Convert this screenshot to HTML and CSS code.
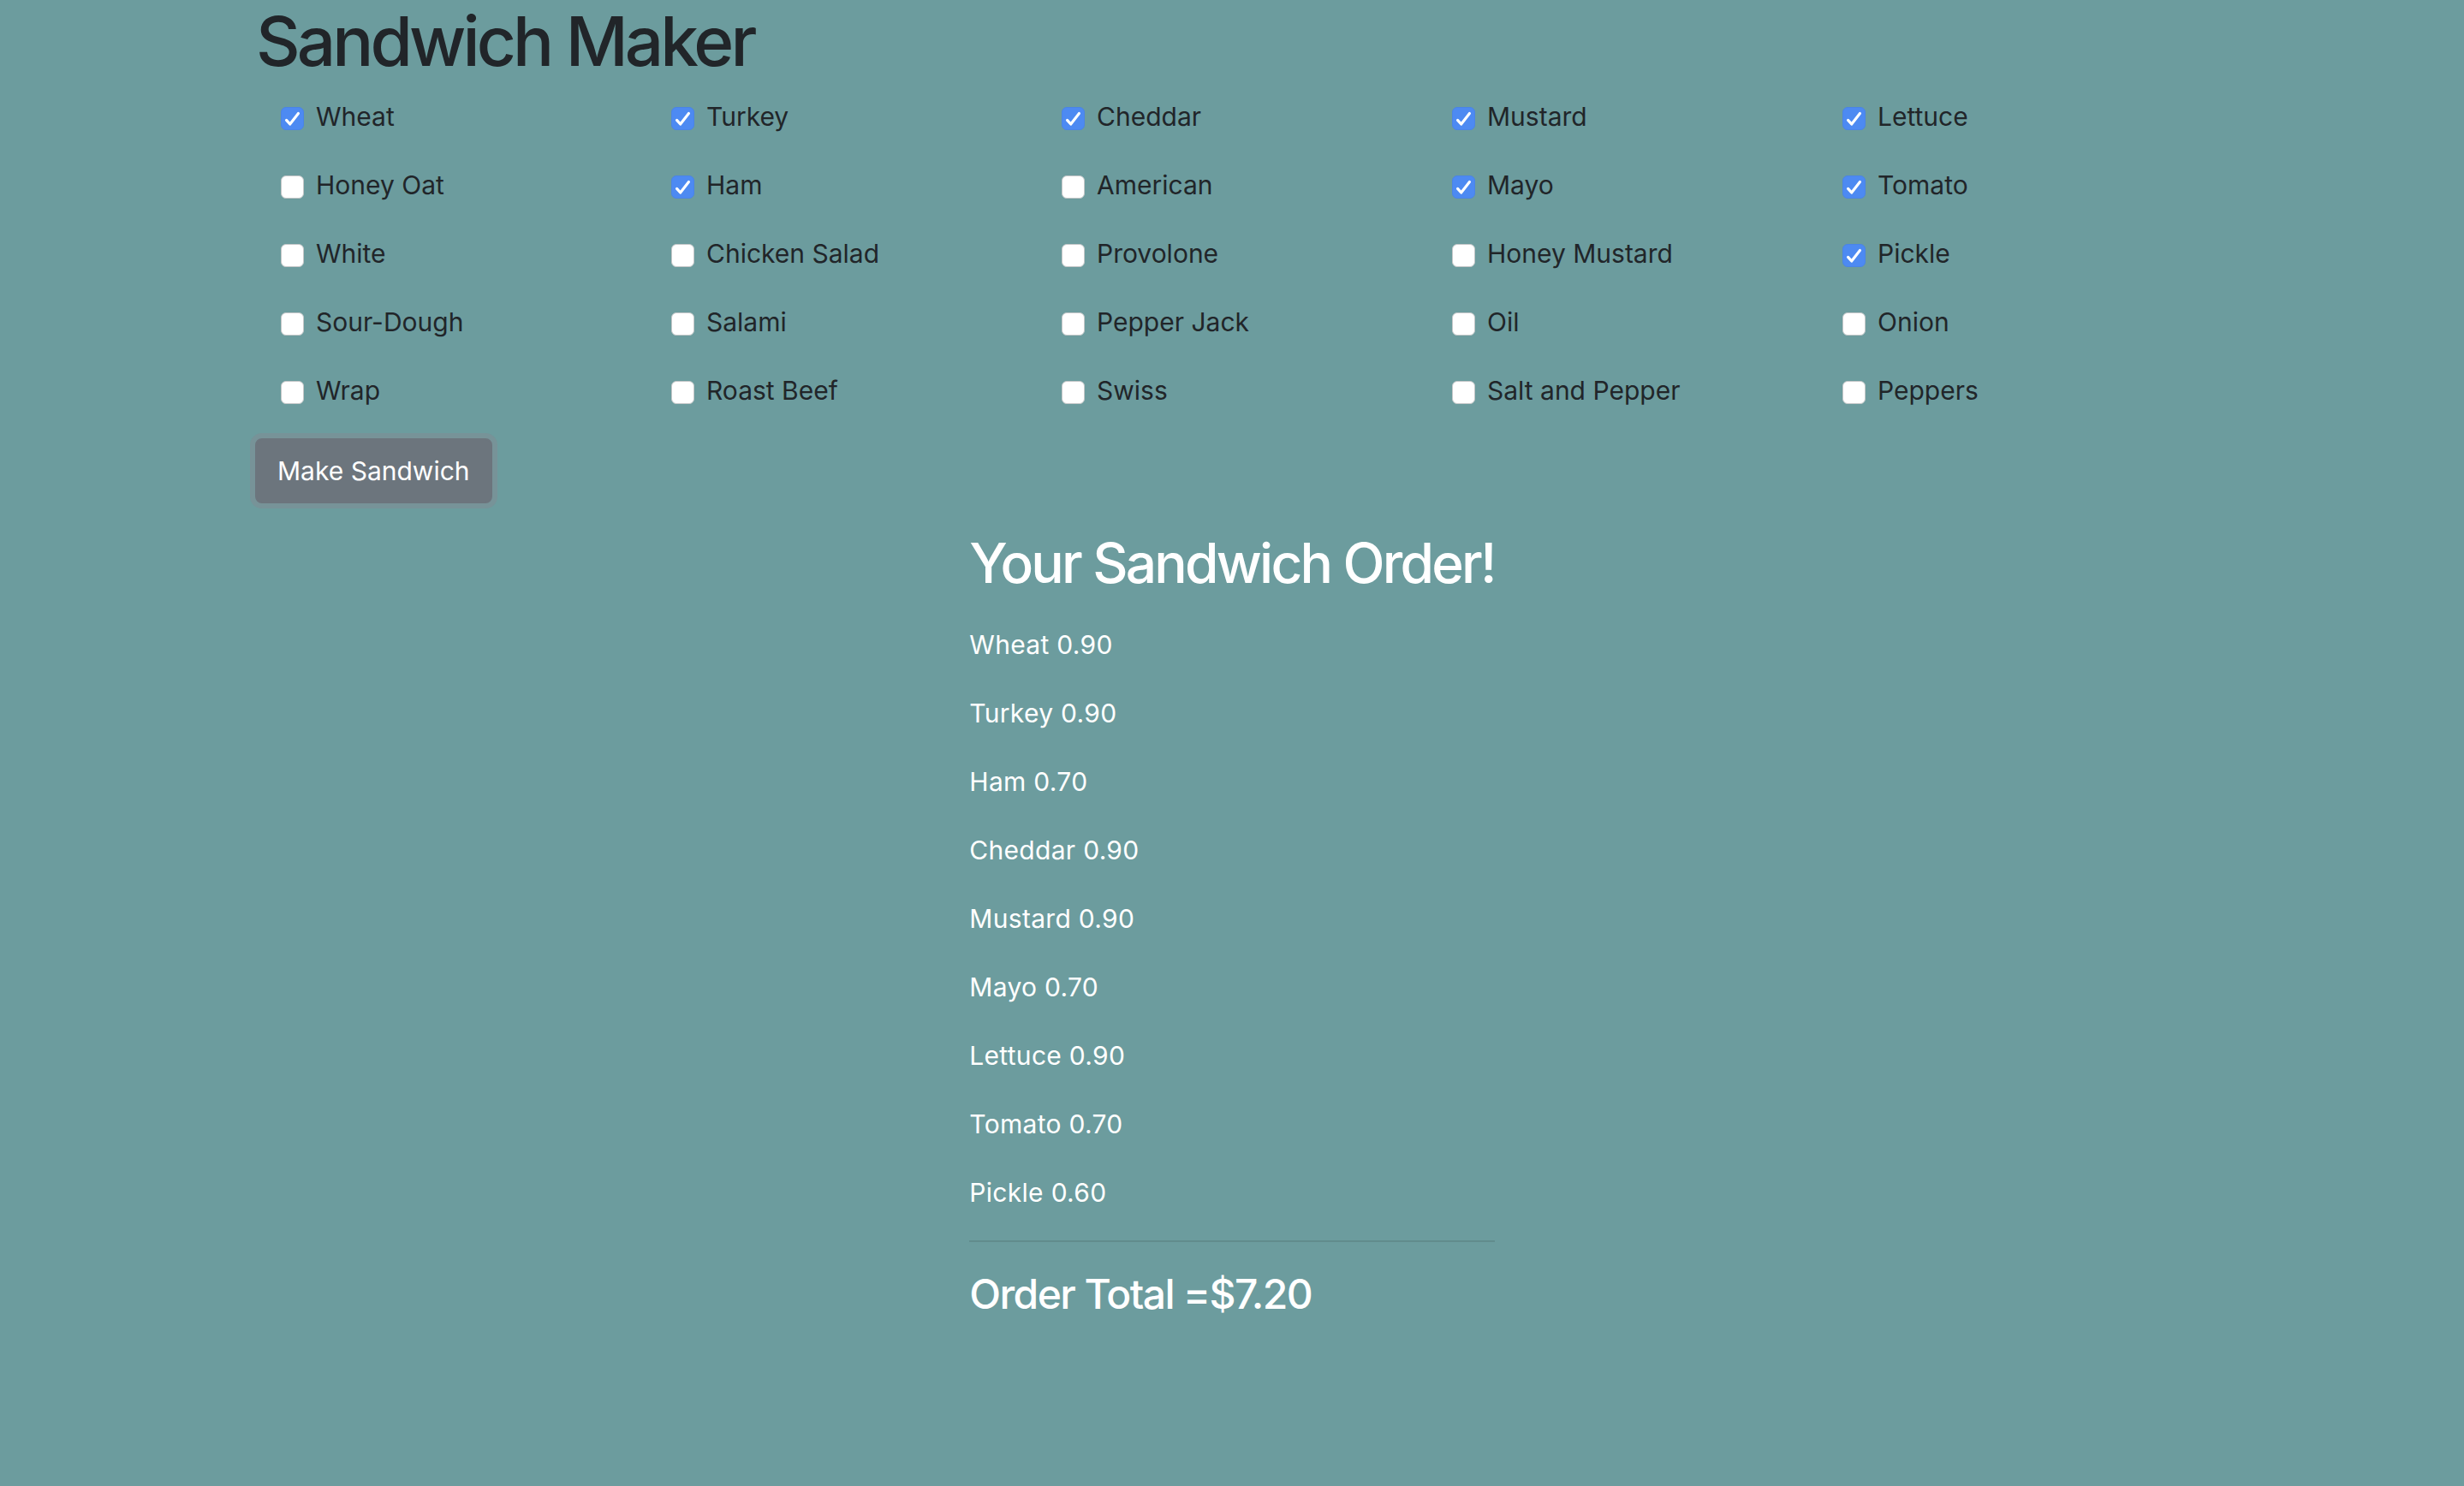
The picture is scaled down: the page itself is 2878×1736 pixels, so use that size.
FILE: index.html
```html
<!DOCTYPE html>
<html lang="en">
<head>
<meta charset="utf-8">
<title>Sandwich Maker</title>
<link rel="stylesheet" href="styles.css">
</head>
<body>
<div class="container">
  <h1 class="title">Sandwich Maker</h1>
  <form class="maker">
    <div class="grid">
      <div class="col">
        <label class="check"><span class="box on"><svg viewBox="0 0 27 27"><path d="M6 15.5 L10.5 20.5 L21 7"/></svg></span>Wheat</label>
        <label class="check"><span class="box"></span>Honey Oat</label>
        <label class="check"><span class="box"></span>White</label>
        <label class="check"><span class="box"></span>Sour-Dough</label>
        <label class="check"><span class="box"></span>Wrap</label>
      </div>
      <div class="col">
        <label class="check"><span class="box on"><svg viewBox="0 0 27 27"><path d="M6 15.5 L10.5 20.5 L21 7"/></svg></span>Turkey</label>
        <label class="check"><span class="box on"><svg viewBox="0 0 27 27"><path d="M6 15.5 L10.5 20.5 L21 7"/></svg></span>Ham</label>
        <label class="check"><span class="box"></span>Chicken Salad</label>
        <label class="check"><span class="box"></span>Salami</label>
        <label class="check"><span class="box"></span>Roast Beef</label>
      </div>
      <div class="col">
        <label class="check"><span class="box on"><svg viewBox="0 0 27 27"><path d="M6 15.5 L10.5 20.5 L21 7"/></svg></span>Cheddar</label>
        <label class="check"><span class="box"></span>American</label>
        <label class="check"><span class="box"></span>Provolone</label>
        <label class="check"><span class="box"></span>Pepper Jack</label>
        <label class="check"><span class="box"></span>Swiss</label>
      </div>
      <div class="col">
        <label class="check"><span class="box on"><svg viewBox="0 0 27 27"><path d="M6 15.5 L10.5 20.5 L21 7"/></svg></span>Mustard</label>
        <label class="check"><span class="box on"><svg viewBox="0 0 27 27"><path d="M6 15.5 L10.5 20.5 L21 7"/></svg></span>Mayo</label>
        <label class="check"><span class="box"></span>Honey Mustard</label>
        <label class="check"><span class="box"></span>Oil</label>
        <label class="check"><span class="box"></span>Salt and Pepper</label>
      </div>
      <div class="col">
        <label class="check"><span class="box on"><svg viewBox="0 0 27 27"><path d="M6 15.5 L10.5 20.5 L21 7"/></svg></span>Lettuce</label>
        <label class="check"><span class="box on"><svg viewBox="0 0 27 27"><path d="M6 15.5 L10.5 20.5 L21 7"/></svg></span>Tomato</label>
        <label class="check"><span class="box on"><svg viewBox="0 0 27 27"><path d="M6 15.5 L10.5 20.5 L21 7"/></svg></span>Pickle</label>
        <label class="check"><span class="box"></span>Onion</label>
        <label class="check"><span class="box"></span>Peppers</label>
      </div>
    </div>
    <button type="button" class="btn">Make Sandwich</button>
  </form>
  <section class="order">
    <h2 class="order-title">Your Sandwich Order!</h2>
    <p class="item">Wheat 0.90</p>
    <p class="item">Turkey 0.90</p>
    <p class="item">Ham 0.70</p>
    <p class="item">Cheddar 0.90</p>
    <p class="item">Mustard 0.90</p>
    <p class="item">Mayo 0.70</p>
    <p class="item">Lettuce 0.90</p>
    <p class="item">Tomato 0.70</p>
    <p class="item">Pickle 0.60</p>
    <hr class="rule">
    <h4 class="total">Order Total =$7.20</h4>
  </section>
</div>
</body>
</html>
```

FILE: styles.css
```css
html, body {
  margin: 0;
  padding: 0;
}
body {
  background: #6c9c9e;
  font-family: Inter, "Liberation Sans", sans-serif;
  color: #212529;
  min-height: 1736px;
}
.container {
  width: 2280px;
  margin: 0 auto;
}
.title {
  margin: 0 0 16px;
  font-size: 80px;
  line-height: 96px;
  font-weight: 500;
  letter-spacing: -3.9px;
}
.maker {
  margin: 0;
}
.grid {
  display: grid;
  grid-template-columns: repeat(5, 456px);
}
.col {
  display: flex;
  flex-direction: column;
  padding-left: 29px;
}
.check {
  display: flex;
  align-items: flex-start;
  height: 48px;
  line-height: 48px;
  margin-bottom: 32px;
  font-size: 30px;
  color: #212529;
}
.box {
  flex: none;
  width: 27px;
  height: 27px;
  margin-top: 12.5px;
  margin-right: 14px;
  box-sizing: border-box;
  border-radius: 6px;
  background: #ffffff;
  border: 1px solid #c4c7c8;
  display: flex;
}
.box.on {
  background: #4d8af2;
  border-color: #4a84e6;
}
.box svg {
  width: 25px;
  height: 25px;
  fill: none;
  stroke: #ffffff;
  stroke-width: 3.4;
  stroke-linecap: round;
  stroke-linejoin: round;
}
.btn {
  display: block;
  height: 76px;
  padding: 0 24px;
  margin: 0 0 32px -1px;
  border: 2px solid #6c757d;
  border-radius: 8px;
  background: #6c757d;
  color: #ffffff;
  font-family: Inter, "Liberation Sans", sans-serif;
  font-size: 30px;
  line-height: 72px;
  box-shadow: 0 0 0 6px rgba(130, 138, 145, 0.5);
}
.order {
  width: fit-content;
  margin: 0 auto;
  color: #ffffff;
}
.order-title {
  margin: 0 0 32px;
  font-size: 64px;
  line-height: 76.8px;
  font-weight: 500;
  letter-spacing: -2.8px;
}
.item {
  margin: 0 0 32px;
  font-size: 30px;
  line-height: 48px;
  letter-spacing: 0.3px;
}
.rule {
  margin: 32px 0;
  border: 0;
  border-top: 2px solid rgba(0, 0, 0, 0.1);
}
.total {
  margin: 0;
  font-size: 48px;
  line-height: 57.6px;
  font-weight: 500;
  letter-spacing: -1.6px;
}
```
